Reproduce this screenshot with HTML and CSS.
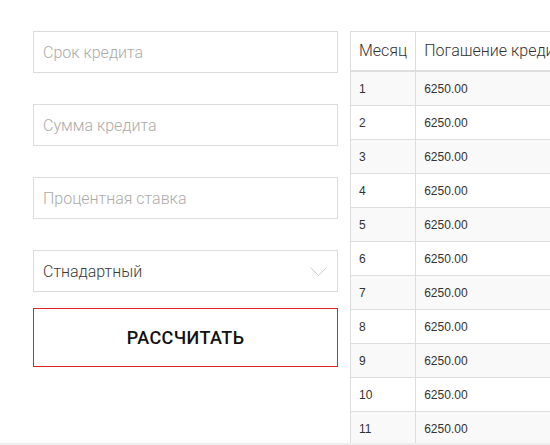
FILE: index.html
```html
<!DOCTYPE html>
<html lang="ru">
<head>
<meta charset="utf-8">
<title>Кредитный калькулятор</title>
<link rel="stylesheet" href="styles.css">
</head>
<body>
<div class="page">
  <form class="calc">
    <input class="field" type="text" placeholder="Срок кредита">
    <input class="field" type="text" placeholder="Сумма кредита">
    <input class="field" type="text" placeholder="Процентная ставка">
    <div class="select">
      <span class="select-value">Стнадартный</span>
      <svg class="chevron" width="17" height="10" viewBox="0 0 17 10"><path d="M0.5 0.5 L8.5 8.5 L16.5 0.5" fill="none" stroke="#cfcfcf" stroke-width="1"/></svg>
    </div>
    <button class="btn" type="button">РАССЧИТАТЬ</button>
  </form>
  <div class="table-wrap">
    <table class="schedule">
      <thead>
        <tr><th class="c-month">Месяц</th><th class="c-pay">Погашение кредита</th></tr>
      </thead>
      <tbody>
        <tr><td>1</td><td>6250.00</td></tr>
        <tr><td>2</td><td>6250.00</td></tr>
        <tr><td>3</td><td>6250.00</td></tr>
        <tr><td>4</td><td>6250.00</td></tr>
        <tr><td>5</td><td>6250.00</td></tr>
        <tr><td>6</td><td>6250.00</td></tr>
        <tr><td>7</td><td>6250.00</td></tr>
        <tr><td>8</td><td>6250.00</td></tr>
        <tr><td>9</td><td>6250.00</td></tr>
        <tr><td>10</td><td>6250.00</td></tr>
        <tr><td>11</td><td>6250.00</td></tr>
      </tbody>
    </table>
  </div>
</div>
</body>
</html>
```
FILE: styles.css
```css
html, body {
  margin: 0;
  padding: 0;
  background: #fff;
}
body {
  font-family: "Liberation Sans", Arial, sans-serif;
  color: #333;
}
.page {
  display: flex;
  align-items: flex-start;
  height: 443px;
  overflow: hidden;
  border-bottom: 2px solid #eeeeee;
  box-sizing: content-box;
}
.calc {
  display: flex;
  flex-direction: column;
  width: 305px;
  margin: 31px 0 0 33px;
  flex-shrink: 0;
}
.field, .select {
  box-sizing: border-box;
  height: 42px;
  width: 305px;
  border: 1px solid #dcdcdc;
  background: #fff;
  padding: 0 9px;
  font-family: Roboto, "Liberation Sans", sans-serif;
  font-weight: 300;
  font-size: 16px;
  color: #444;
  margin: 0 0 31px 0;
  outline: none;
}
.field::placeholder {
  color: #ababab;
  opacity: 1;
}
.select {
  display: flex;
  align-items: center;
  justify-content: space-between;
  margin-bottom: 16px;
  padding-right: 10px;
}
.select-value {
  color: #3a3a3a;
}
.chevron {
  display: block;
  margin-top: 2px;
}
.btn {
  box-sizing: border-box;
  height: 59px;
  width: 305px;
  border: 1px solid #e42222;
  background: #fff;
  font-family: Roboto, "Liberation Sans", sans-serif;
  font-weight: 500;
  font-size: 18px;
  color: #111;
  letter-spacing: 0.4px;
  padding: 0;
  cursor: pointer;
}
.table-wrap {
  margin: 31px 0 0 12px;
  flex-shrink: 0;
}
.schedule {
  border-collapse: collapse;
  border: 1px solid #dddddd;
  width: 260px;
}
.schedule th, .schedule td {
  border: 1px solid #dddddd;
  padding: 8px;
  text-align: left;
  vertical-align: top;
}
.schedule th {
  font-family: Roboto, "Liberation Sans", sans-serif;
  font-weight: 300;
  font-size: 16px;
  line-height: 22px;
  color: #333;
  border-bottom: 2px solid #dddddd;
  white-space: nowrap;
}
.schedule td {
  font-size: 12px;
  line-height: 17px;
  padding-top: 9px;
  padding-bottom: 7px;
  color: #333;
}
.c-month {
  width: 48px;
}
.schedule tbody tr:nth-child(odd) {
  background: #f9f9f9;
}
```
